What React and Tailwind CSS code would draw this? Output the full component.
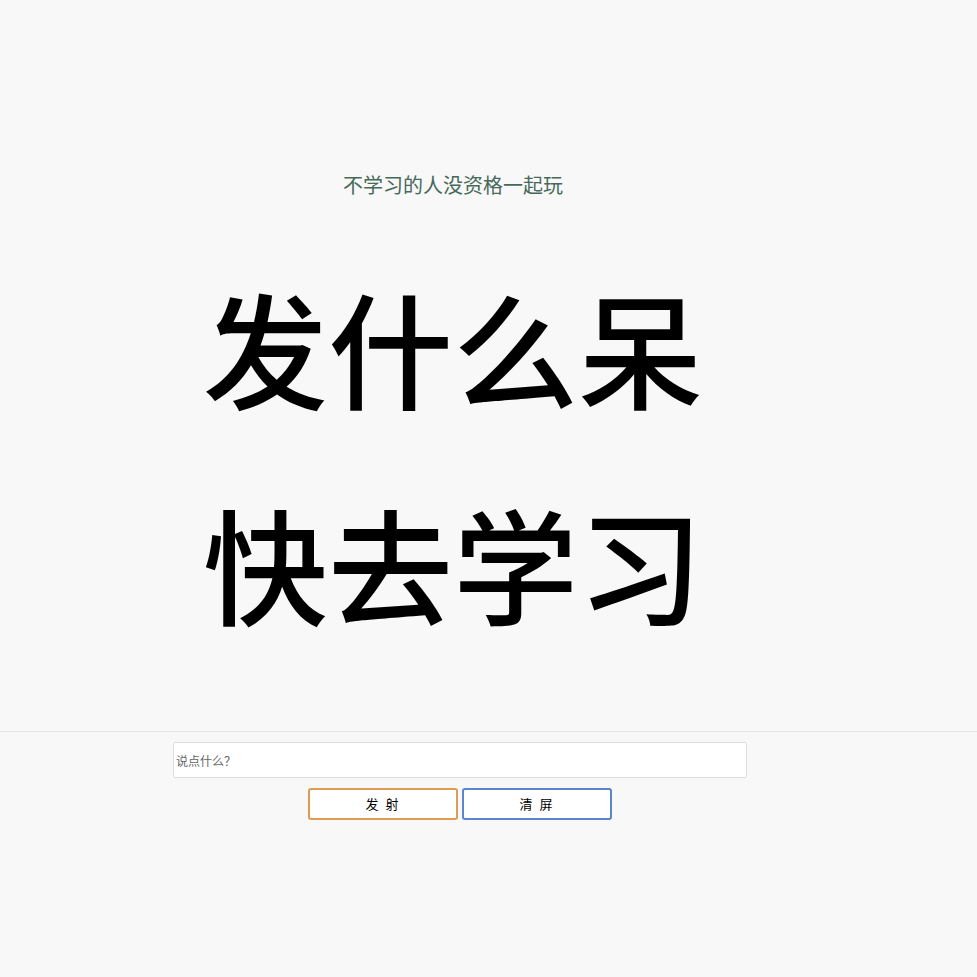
export default function App() {
  const cjk = { fontFamily: '"Noto Sans CJK SC", "Noto Sans", sans-serif' };

  return (
    <div className="min-h-screen bg-[#f8f8f8]" style={cjk}>
      <div className="h-[732px] border-b border-[#e4e4e4]">
        <div className="w-[906px] flex flex-col items-center pt-[171px]">
          <p className="text-[20px] leading-[28px] text-[#46695a]">不学习的人没资格一起玩</p>
          <div className="mt-[39px] text-[125px] leading-[216px] font-medium text-black text-center">
            <div>发什么呆</div>
            <div>快去学习</div>
          </div>
        </div>
      </div>

      <div className="w-[920px] flex flex-col items-center pt-[10px]">
        <input
          type="text"
          placeholder="说点什么？"
          className="w-[574px] h-[36px] bg-white border border-[#dcdcdc] rounded-[2px] px-[2px] text-[12px] text-[#333] placeholder:text-[#666] outline-none"
        />
        <div className="flex gap-[4px] mt-[10px]">
          <button className="w-[150px] h-[32px] bg-white border-2 border-[#df9a55] rounded-[3px] text-[13px] tracking-[2px] text-black">
            发 射
          </button>
          <button className="w-[150px] h-[32px] bg-white border-2 border-[#5b86cf] rounded-[3px] text-[13px] tracking-[2px] text-black">
            清 屏
          </button>
        </div>
      </div>
    </div>
  );
}
